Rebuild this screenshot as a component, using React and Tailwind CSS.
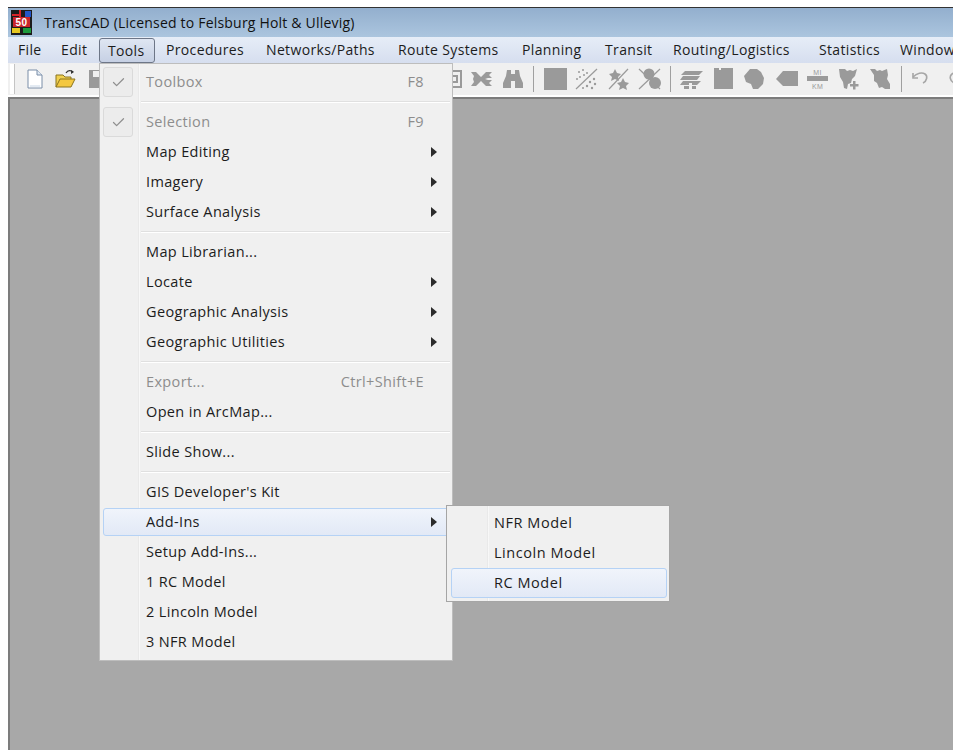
import { Check } from "lucide-react"

const menuBar = [
  { label: "File", w: "w-[43px]" },
  { label: "Edit", w: "w-[47px]" },
  { label: "Tools", w: "w-[58px]" },
  { label: "Procedures", w: "w-[100px]" },
  { label: "Networks/Paths", w: "w-[132px]" },
  { label: "Route Systems", w: "w-[124px]" },
  { label: "Planning", w: "w-[83px]" },
  { label: "Transit", w: "w-[68px]" },
  { label: "Routing/Logistics", w: "w-[146px]" },
  { label: "Statistics", w: "w-[81px]" },
  { label: "Window", w: "w-[70px]" },
]

const GREY = "#9a9a9a"

// disabled toolbar glyphs, all on the same 23x22 grid
const Frame = () => (
  <g fill="none" stroke={GREY} strokeWidth="2">
    <rect x="8" y="3" width="14" height="16" />
    <rect x="12" y="8" width="6" height="6" />
  </g>
)
const Join = () => (
  <path d="M1 4h5l5 5 5-5h6l-3 3 3 3h-4l-3 1 3 1h4l-3 3 3 3h-6l-5-5-5 5H1l3-4-1-3 1-3z" fill={GREY} />
)
const Binoculars = () => (
  <path d="M5 2h4v4h4V2h4l1 6 3 7v5h-8v-7h-4v7H1v-5l3-7z" fill={GREY} />
)
const Square = () => <rect x="0" y="0" width="23" height="22" fill={GREY} />
const Hatch = () => (
  <g fill={GREY}>
    <path d="M1 21 22 1" stroke={GREY} strokeWidth="1.2" />
    <circle cx="4" cy="4" r="1" /><circle cx="8" cy="2" r="1" /><circle cx="12" cy="5" r="1" /><circle cx="5" cy="9" r="1" /><circle cx="9" cy="7" r="1" /><circle cx="2" cy="11" r="1" />
    <circle cx="19" cy="11" r="1.2" /><circle cx="15" cy="14" r="1.2" /><circle cx="20" cy="16" r="1.2" /><circle cx="12" cy="18" r="1.2" /><circle cx="17" cy="20" r="1.2" /><circle cx="8" cy="20" r="1" />
  </g>
)
const StarHatch = () => (
  <g fill={GREY}>
    <path d="M2 21 21 1" stroke={GREY} strokeWidth="1.2" />
    <path d="m8 1 2 4 4 1-3 3 1 4-4-2-4 2 1-4-3-3 4-1z" />
    <path d="m16 10 2 4 4 1-3 3 1 4-4-2-4 2 1-4-3-3 4-1z" />
  </g>
)
const Circles = () => (
  <g fill={GREY}>
    <path d="M1 1 22 21" stroke={GREY} strokeWidth="1.2" />
    <circle cx="11" cy="6" r="5.5" />
    <circle cx="17" cy="15" r="6" />
    <path d="M1 21 22 1" stroke={GREY} strokeWidth="1.2" />
  </g>
)
const Layers = () => (
  <g fill={GREY}>
    <path d="M5 3h18l-4 4H1z" />
    <path d="M3 8h17l-3 4H0z" />
    <path d="M3 13h18l-4 4h-5v-2H9v2H0z" />
    <path d="M4 18h5v3H4zM12 18h4v3h-4z" />
  </g>
)
const Page = () => (
  <path d="M2 0h5v2h2V0h12v21H2z" fill={GREY} />
)
const Blob = () => (
  <path d="M7 1h7l4 3 3 6-1 6-5 5h-5l-2-5-5-2-2-6z" fill={GREY} />
)
const Tag = () => <path d="M8 3h15v15H8l-7-7z" fill={GREY} />
const Scale = () => (
  <g fontFamily="Liberation Sans, sans-serif" fontSize="7" fill={GREY} textAnchor="middle">
    <text x="11.500" y="6.500">MI</text>
    <rect x="1" y="8" width="21" height="5" />
    <text x="11.500" y="20.500">KM</text>
  </g>
)
const MapPlus = () => (
  <g fill={GREY}>
    <path d="M1 1h6l2 2 3-1 3 1 4-2-2 7-3 3-1 4-3 1-1 5-3-1-1-6-3-5z" />
    <path d="M15 13h2.500v3h3v2.500h-3v3H15v-3h-3V16h3z" />
  </g>
)
const MapShape = () => (
  <path d="M1 1h5l2 2 3-1 2 1 5-2 1 6-1 4 3 5v5h-5l-3-2-3 1-2-5-3-2V7z" fill={GREY} />
)
const Undo = () => (
  <g fill="none" stroke="#a6a6a6" strokeWidth="1.600">
    <path d="M2 9c4-4 9-5 12-3s2 7-2 9" />
    <path d="M2 5v5h5" />
  </g>
)
const Redo = () => (
  <g fill="none" stroke="#a6a6a6" strokeWidth="1.600">
    <path d="M21 9c-4-4-9-5-12-3s-2 7 2 9" />
  </g>
)

const ToolIcon = ({ children }) => (
  <div className="w-[31.5px] shrink-0">
    <svg width="23" height="22" viewBox="0 0 23 22" className="block">{children}</svg>
  </div>
)

const ToolSep = () => (
  <div className="w-[10.5px] shrink-0">
    <div className="w-px h-[26px] bg-[#a0a0a0]" />
  </div>
)

const AppLogo = () => (
  <svg width="21" height="25" viewBox="0 0 21 25" className="block shrink-0">
    <rect width="21" height="25" fill="#1c1c1c" />
    <path d="M9 0v10" stroke="#d8232a" strokeWidth="2" />
    <path d="M1 5h8" stroke="#d8232a" strokeWidth="2" />
    <rect x="14" y="1" width="6" height="6" fill="#2456c8" />
    <rect x="2" y="7" width="17" height="10" fill="#c9252b" />
    <rect x="1" y="18" width="8" height="5" fill="#e6c820" />
    <rect x="12" y="18" width="8" height="5" fill="#1d9a3c" />
    <text x="10.500" y="15.500" textAnchor="middle" fontSize="10" fontWeight="700" fill="#fff" fontFamily="Liberation Sans, sans-serif">50</text>
  </svg>
)

const NewDoc = () => (
  <svg width="16" height="20" viewBox="0 0 16 20" className="block">
    <path d="M1 1h9l5 5v13H1z" fill="#fff" stroke="#7a8ea8" />
    <path d="M10 1v5h5" fill="#dfe8f2" stroke="#7a8ea8" />
    <path d="M3 17h10" stroke="#c8d6e6" />
  </svg>
)

const OpenFolder = () => (
  <svg width="21" height="20" viewBox="0 0 21 20" className="block">
    <path d="M1 18V6h7l2 2h6v3" fill="#f0d050" stroke="#8a7420" />
    <path d="M1 18 5 10h15l-4 8z" fill="#f4c840" stroke="#8a7420" />
    <path d="M11 4c2-3 5-3 7-1" fill="none" stroke="#333" strokeWidth="1.300" />
    <path d="m16 1 3 2-3 2z" fill="#333" />
  </svg>
)

const SaveDisk = () => (
  <svg width="21" height="20" viewBox="0 0 21 20" className="block">
    <path d="M1 1h19v18H1z" fill={GREY} />
    <path d="M5 2h9v6H5z" fill="#f0f0f0" />
  </svg>
)

const MenuRow = ({ label, disabled, shortcut, sub, checked, active }) => (
  <div className="relative h-[30px] flex items-center">
    {active && (
      <div className="absolute left-[3px] top-[1px] bottom-[1px] right-[-2px] rounded-[3px] border border-[#b5d2f5] bg-gradient-to-b from-[#f0f4fb] to-[#e2e9f6]" />
    )}
    {checked && (
      <div className="absolute left-[3px] top-0 w-[30px] h-[30px] rounded-[3px] border border-[#dadada] bg-[#ececec] flex items-center justify-center">
        <Check size={15} strokeWidth={2} className="text-[#8f8f8f]" />
      </div>
    )}
    <span className={`relative ml-[46px] ${disabled ? "text-[#8d8d8d]" : "text-[#1c1c1c]"}`}>{label}</span>
    {shortcut && <span className={`relative ml-auto mr-[28px] ${disabled ? "text-[#8d8d8d]" : "text-[#1c1c1c]"}`}>{shortcut}</span>}
    {sub && (
      <svg width="6" height="10" viewBox="0 0 6 10" className="relative ml-auto mr-[15px]">
        <path d="M0 0 6 5 0 10z" fill="#2b2b2b" />
      </svg>
    )}
  </div>
)

const MenuSep = () => (
  <div className="h-[10px] flex flex-col justify-center ml-[41px] mr-[2px]">
    <div className="h-px bg-[#e0e0e0]" />
    <div className="h-px bg-white" />
  </div>
)

const SubRow = ({ label, active }) => (
  <div className={`h-[30px] flex items-center ${active ? "ml-[4px] mr-[2px] rounded-[3px] border border-[#b5d2f5] bg-gradient-to-b from-[#f0f4fb] to-[#e2e9f6] pl-[42px]" : "ml-[3px] pl-[44px]"}`}>
    <span className="text-[#1c1c1c]">{label}</span>
  </div>
)

const App = () => {
  return (
    <div className="relative w-[953px] h-[750px] overflow-hidden bg-white pt-[7px] font-['Open_Sans',sans-serif] text-[14px] leading-none tracking-[0.35px]">
      <div className="ml-[8px] h-[743px] flex flex-col border-t border-[#333]">
        <div className="h-[29px] shrink-0 flex items-center gap-[12px] pl-[3px] bg-gradient-to-b from-[#93afce] to-[#abc5de] text-[#111]">
          <AppLogo />
          <span className="text-[14px] tracking-[0.2px]">TransCAD (Licensed to Felsburg Holt &amp; Ullevig)</span>
        </div>

        <div className="h-[26px] shrink-0 flex items-center pl-[10px] bg-gradient-to-b from-[#e6edf7] to-[#d6deef] overflow-hidden whitespace-nowrap text-[#1c1c1c]">
          {menuBar.map((item) => (
            <div key={item.label} className={`${item.w} shrink-0`}>{item.label}</div>
          ))}
        </div>

        <div className="h-[34px] shrink-0 flex items-center bg-[#f0f0f0] border-b-2 border-white overflow-hidden">
          <div className="w-[5px] h-[30px] ml-[2px] bg-white border-r border-[#c4c4c4] shrink-0" />
          <div className="ml-[12px] shrink-0"><NewDoc /></div>
          <div className="ml-[12px] shrink-0"><OpenFolder /></div>
          <div className="ml-[12px] shrink-0"><SaveDisk /></div>
          <div className="ml-[329.500px] flex items-center">
            <ToolIcon><Frame /></ToolIcon>
            <ToolIcon><Join /></ToolIcon>
            <ToolIcon><Binoculars /></ToolIcon>
            <ToolSep />
            <ToolIcon><Square /></ToolIcon>
            <ToolIcon><Hatch /></ToolIcon>
            <ToolIcon><StarHatch /></ToolIcon>
            <ToolIcon><Circles /></ToolIcon>
            <ToolSep />
            <ToolIcon><Layers /></ToolIcon>
            <ToolIcon><Page /></ToolIcon>
            <ToolIcon><Blob /></ToolIcon>
            <ToolIcon><Tag /></ToolIcon>
            <ToolIcon><Scale /></ToolIcon>
            <ToolIcon><MapPlus /></ToolIcon>
            <ToolIcon><MapShape /></ToolIcon>
            <ToolSep />
            <ToolIcon><Undo /></ToolIcon>
            <ToolIcon><Redo /></ToolIcon>
          </div>
        </div>

        <div className="flex-1 bg-[#a8a8a8] border-t-2 border-l-2 border-[#7c7c7c]" />
      </div>

      {/* pressed Tools entry in the menu bar */}
      <div className="absolute left-[99px] top-[38px] w-[56px] h-[25px] rounded-[3px] border border-[#6d7687] bg-gradient-to-b from-[#dfe6f2] to-[#c6d0e4] flex items-center pl-[8px] text-[#1c1c1c]">Tools</div>

      {/* open Tools dropdown */}
      <div className="absolute left-[99px] top-[63px] w-[354px] h-[598px] border border-[#bdbdbd] bg-[#f0f0f0] py-[3px] text-[14.500px]">
        <div className="absolute left-[38px] top-0 bottom-0 w-[2px] bg-gradient-to-r from-[#e2e2e2] to-white" />
        <MenuRow label="Toolbox" shortcut="F8" disabled checked />
        <MenuSep />
        <MenuRow label="Selection" shortcut="F9" disabled checked />
        <MenuRow label="Map Editing" sub />
        <MenuRow label="Imagery" sub />
        <MenuRow label="Surface Analysis" sub />
        <MenuSep />
        <MenuRow label="Map Librarian..." />
        <MenuRow label="Locate" sub />
        <MenuRow label="Geographic Analysis" sub />
        <MenuRow label="Geographic Utilities" sub />
        <MenuSep />
        <MenuRow label="Export..." shortcut="Ctrl+Shift+E" disabled />
        <MenuRow label="Open in ArcMap..." />
        <MenuSep />
        <MenuRow label="Slide Show..." />
        <MenuSep />
        <MenuRow label="GIS Developer's Kit" />
        <MenuRow label="Add-Ins" sub active />
        <MenuRow label="Setup Add-Ins..." />
        <MenuRow label="1 RC Model" />
        <MenuRow label="2 Lincoln Model" />
        <MenuRow label="3 NFR Model" />
      </div>

      {/* Add-Ins flyout */}
      <div className="absolute left-[446px] top-[505px] w-[224px] h-[97px] border border-[#a5a5a5] bg-[#f0f0f0] pt-[2px] text-[14.500px] tracking-[0.55px]">
        <div className="absolute left-[40px] top-0 bottom-0 w-[2px] bg-gradient-to-r from-[#e2e2e2] to-white" />
        <div className="relative">
          <SubRow label="NFR Model" />
          <SubRow label="Lincoln Model" />
          <SubRow label="RC Model" active />
        </div>
      </div>
    </div>
  )
}

export default App
